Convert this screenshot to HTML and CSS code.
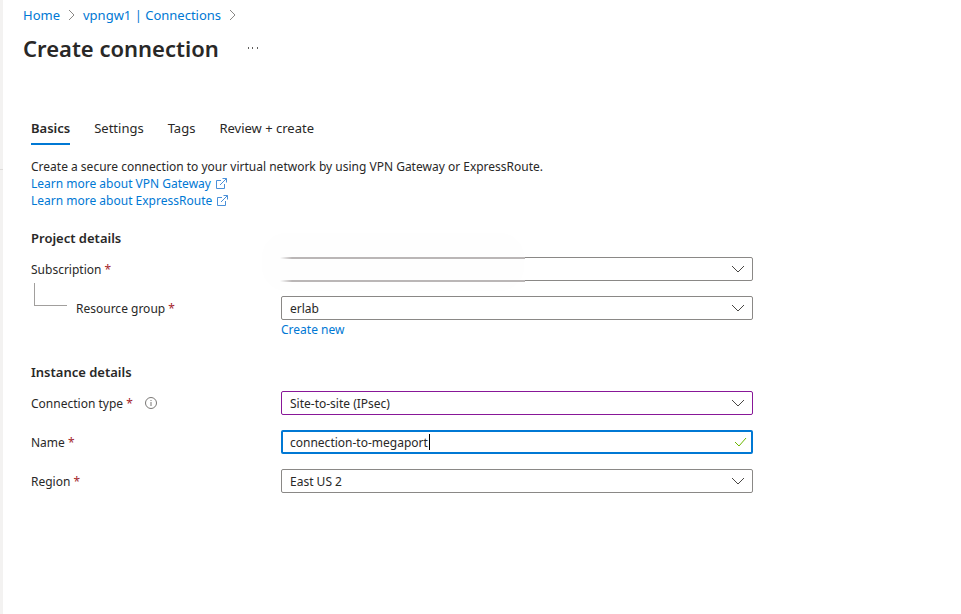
FILE: index.html
```html
<!DOCTYPE html>
<html lang="en">
<head>
<meta charset="utf-8">
<meta name="viewport" content="width=device-width, initial-scale=1">
<title>Create connection</title>
<link rel="stylesheet" href="styles.css">
</head>
<body>
<div class="blade">
  <nav class="breadcrumb" aria-label="Breadcrumb">
    <a href="#">Home</a>
    <svg class="crumb-arrow" viewBox="0 0 7 12" aria-hidden="true"><path d="M1 1l5 5-5 5"/></svg>
    <a href="#">vpngw1 | Connections</a>
    <svg class="crumb-arrow" viewBox="0 0 7 12" aria-hidden="true"><path d="M1 1l5 5-5 5"/></svg>
  </nav>
  <header class="title-row">
    <h1>Create connection</h1>
    <button class="more" type="button" aria-label="More actions">
      <svg viewBox="0 0 12 2" aria-hidden="true"><path d="M1 0h1v2H1zM5 0h1v2H5zM10 0h1v2h-1z"/></svg>
    </button>
  </header>
  <main class="content">
    <div class="tabs" role="tablist">
      <button class="tab tab-active" type="button" role="tab" aria-selected="true">Basics</button>
      <button class="tab" type="button" role="tab" aria-selected="false">Settings</button>
      <button class="tab" type="button" role="tab" aria-selected="false">Tags</button>
      <button class="tab" type="button" role="tab" aria-selected="false">Review + create</button>
    </div>
    <div class="intro">
      <p>Create a secure connection to your virtual network by using VPN Gateway or ExpressRoute.</p>
      <p><a href="#">Learn more about VPN Gateway<svg class="external" viewBox="0 0 11 11" aria-hidden="true"><path d="M5 2.500H.5v8h8V6M6.500.5h4v4M10.500.5L4 7"/></svg></a></p>
      <p><a href="#">Learn more about ExpressRoute<svg class="external" viewBox="0 0 11 11" aria-hidden="true"><path d="M5 2.500H.5v8h8V6M6.500.5h4v4M10.500.5L4 7"/></svg></a></p>
    </div>
    <form>
      <section class="group">
        <h2>Project details</h2>
        <div class="row">
          <div class="label"><label for="subscription">Subscription <span class="required">*</span></label></div>
          <div class="field redacted">
            <select id="subscription"><option></option></select>
            <svg class="chevron" viewBox="0 0 14 8" aria-hidden="true"><path d="M1 1l6 6 6-6"/></svg>
          </div>
        </div>
        <div class="row">
          <div class="label label-child"><label for="group">Resource group <span class="required">*</span></label></div>
          <div class="field">
            <select id="group"><option>erlab</option></select>
            <svg class="chevron" viewBox="0 0 14 8" aria-hidden="true"><path d="M1 1l6 6 6-6"/></svg>
          </div>
          <a class="create-new" href="#">Create new</a>
        </div>
      </section>
      <section class="group">
        <h2>Instance details</h2>
        <div class="row">
          <div class="label">
            <label for="type">Connection type <span class="required">*</span></label>
            <button class="info" type="button" aria-label="About connection type">
              <svg viewBox="0 0 12 12" aria-hidden="true"><circle cx="6" cy="6" r="5.500"/><path d="M6 5v4M6 3v1"/></svg>
            </button>
          </div>
          <div class="field field-edited">
            <select id="type"><option>Site-to-site (IPsec)</option></select>
            <svg class="chevron" viewBox="0 0 14 8" aria-hidden="true"><path d="M1 1l6 6 6-6"/></svg>
          </div>
        </div>
        <div class="row">
          <div class="label"><label for="name">Name <span class="required">*</span></label></div>
          <div class="field field-focus">
            <input id="name" type="text" value="connection-to-megaport">
            <span class="caret"></span>
            <svg class="check" viewBox="0 0 13 10" aria-hidden="true"><path d="M1 5l4 4 7-8"/></svg>
          </div>
        </div>
        <div class="row">
          <div class="label"><label for="region">Region <span class="required">*</span></label></div>
          <div class="field">
            <select id="region"><option>East US 2</option></select>
            <svg class="chevron" viewBox="0 0 14 8" aria-hidden="true"><path d="M1 1l6 6 6-6"/></svg>
          </div>
        </div>
      </section>
    </form>
  </main>
</div>
</body>
</html>
```
FILE: styles.css
```css
*, *::before, *::after { box-sizing: border-box; }

body {
  margin: 0;
  color: #292827;
  background: #fff;
  font: 12px/17px "Segoe UI", "Noto Sans", "Open Sans", sans-serif;
}

button, input, select { font: inherit; color: inherit; }
button { padding: 0; border: 0; background: none; cursor: pointer; }
h1, h2, p { margin: 0; }
a { color: #0078d4; text-decoration: none; }
svg { fill: none; }

.blade {
  position: relative;
  min-height: 100vh;
  padding: 6px 20px 20px;
  border-left: 3px solid #f3f2f1;
}

/* Divider of the menu behind the blade edge */
.blade::before {
  content: "";
  position: absolute;
  top: 169px;
  left: -3px;
  width: 3px;
  height: 1px;
  background: #dddbd9;
}

.breadcrumb {
  display: flex;
  align-items: center;
  gap: 8px;
  font-size: 13px;
  line-height: 18px;
}

.crumb-arrow { width: 7px; height: 12px; stroke: #8a8886; }

.title-row {
  display: flex;
  align-items: center;
  gap: 28px;
  margin-top: 8px;
}

h1 { font-size: 22px; line-height: 32px; font-weight: 600; }

.more { display: flex; }
.more svg { width: 12px; height: 2px; fill: #605e5c; }

.content { padding: 52px 0 0 8px; }

.tabs { display: flex; gap: 24px; font-size: 13px; }

.tab {
  padding: 3px 0 6px;
  line-height: 18px;
  border-bottom: 2px solid transparent;
}

.tab-active { font-weight: 600; border-color: #0078d4; }

.intro { margin-top: 13px; }

.external {
  width: 11px;
  height: 11px;
  margin-left: 5px;
  vertical-align: -1px;
  stroke: #4a90d9;
}

h2 {
  margin-bottom: 10px;
  font-size: 13px;
  line-height: 18px;
  font-weight: 600;
}

.group { margin-top: 20px; }
.group + .group { margin-top: 25px; }

.row {
  display: grid;
  grid-template-columns: 250px minmax(0, 472px);
}

.row + .row { margin-top: 15px; }

.label {
  position: relative;
  display: flex;
  align-items: center;
  gap: 12px;
  height: 24px;
}

.label-child { padding-left: 45px; }

.label-child::before {
  content: "";
  position: absolute;
  left: 3px;
  bottom: 14px;
  width: 33px;
  height: 23px;
  border: solid #a19f9d;
  border-width: 0 0 1px 1px;
}

.required { color: #a4262c; }

.info { display: flex; }
.info svg { width: 12px; height: 12px; stroke: #797775; }

.field { position: relative; }

.field select, .field input {
  display: block;
  width: 100%;
  height: 24px;
  padding: 0 30px 0 8px;
  border: 1px solid #8a8886;
  border-radius: 2px;
  background: #fff;
  outline: 0;
  appearance: none;
}

.field-edited select { border-color: #881798; }

.field-focus input {
  padding-left: 7px;
  border: 2px solid #0078d4;
}

.chevron, .check { position: absolute; pointer-events: none; }
.chevron { top: 8px; right: 8px; width: 14px; height: 8px; stroke: #484644; }
.check { top: 7px; right: 6px; width: 13px; height: 10px; stroke: #6bb700; }

.caret {
  position: absolute;
  top: 4px;
  left: 148px;
  width: 1px;
  height: 16px;
  background: #000;
}

/* Smudge that hides the subscription's name */
.redacted::before {
  content: "";
  position: absolute;
  top: -24px;
  left: -19px;
  width: 262px;
  height: 58px;
  border-radius: 24px;
  background: #fefefe;
  pointer-events: none;
}

.redacted::after {
  content: "";
  position: absolute;
  top: 0;
  left: -1px;
  width: 245px;
  height: 25px;
  border: solid #bab6b6;
  border-width: 2px 0;
  -webkit-mask: linear-gradient(to right, transparent, #000 12px);
  mask: linear-gradient(to right, transparent, #000 12px);
  pointer-events: none;
}

.create-new { grid-column: 2; justify-self: start; margin-top: 1px; }
```
